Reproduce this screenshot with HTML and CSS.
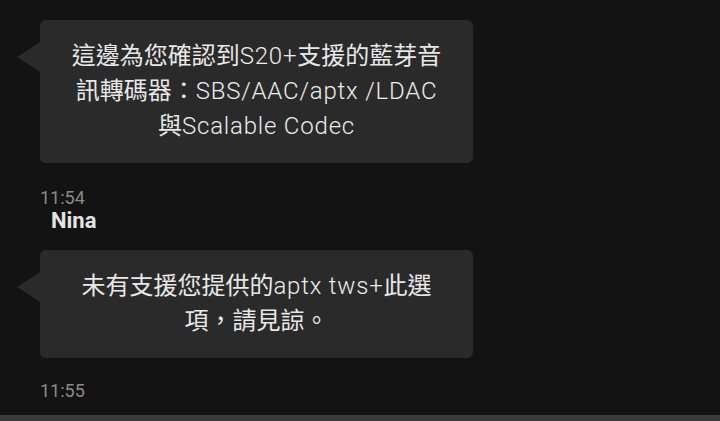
FILE: index.html
```html
<!DOCTYPE html>
<html lang="zh-Hant">
<head>
    <meta charset="utf-8" />
    <title>Chat</title>
    <link rel="stylesheet" href="styles.css">
</head>
<body>
    <div class="chat">
        <div class="bubble">這邊為您確認到<span class="en">S20+</span>支援的藍芽音<br>訊轉碼器：<span class="en">SBS/AAC/aptx /LDAC</span><br>與<span class="en">Scalable Codec</span></div>
        <div class="time first">11:54</div>
        <div class="sender">Nina</div>
        <div class="bubble">未有支援您提供的<span class="en">aptx tws+</span>此選<br>項，請見諒。</div>
        <div class="time">11:55</div>
    </div>
    <div class="bottomBar"></div>
</body>
</html>
```

FILE: styles.css
```css
html, body {
    height: 100%;
}
body {
    margin: 0;
    background-color: #131313;
    font-family: Roboto, "Noto Sans CJK TC", sans-serif;
    display: flex;
    flex-direction: column;
    overflow: hidden;
}
.chat {
    flex: 1;
    padding: 20px 0 0 40px;
}
.bubble {
    position: relative;
    width: 433px;
    box-sizing: border-box;
    padding: 19px 20px;
    background-color: #2a2a2a;
    border-radius: 6px;
    color: #e8e8e8;
    font-size: 24px;
    line-height: 35px;
    text-align: center;
}
.bubble::before {
    content: "";
    position: absolute;
    left: -23px;
    top: 22px;
    border-style: solid;
    border-width: 15.5px 23px 15.5px 0;
    border-color: transparent #2a2a2a transparent transparent;
}
.en {
    font-weight: 300;
    letter-spacing: 0.8px;
    color: #ececec;
}
.time {
    color: #8a8a8a;
    font-size: 18px;
    line-height: 22px;
    margin-top: 22px;
}
.time.first {
    margin-top: 24px;
}
.sender {
    color: #e4e4e4;
    font-size: 22px;
    font-weight: bold;
    line-height: 24px;
    padding-left: 11px;
    margin-bottom: 17px;
}
.bottomBar {
    height: 6px;
    background-color: #3a3a3a;
}
```
